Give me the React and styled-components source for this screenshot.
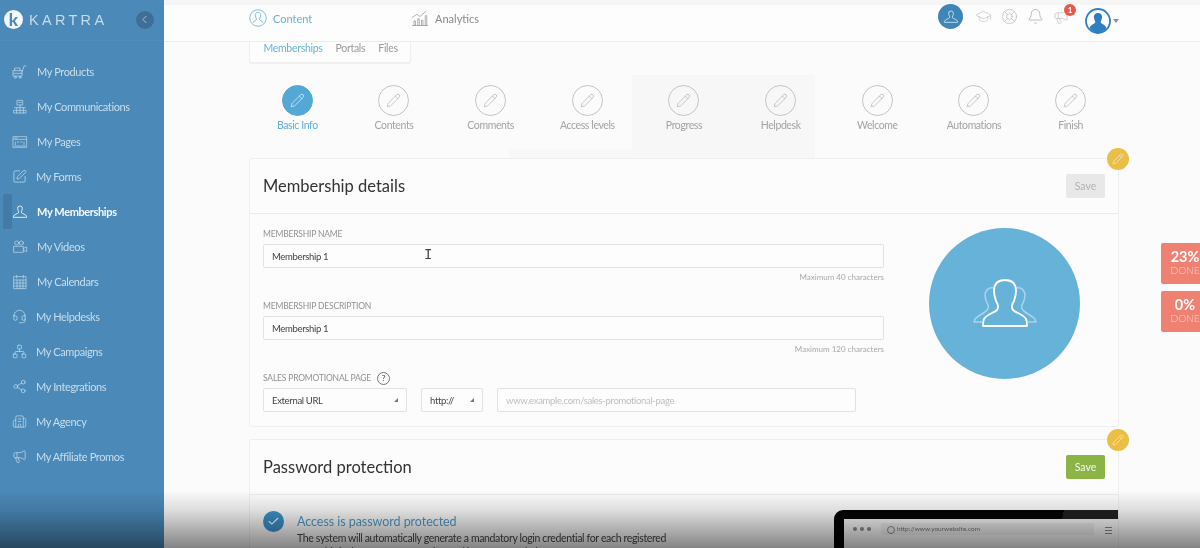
import React from "react";
import styled, { createGlobalStyle } from "styled-components";
import { Pencil, GraduationCap, LifeBuoy, Bell, Megaphone, SquarePen, Headset, Network, Share2, Building2, ChevronLeft, Check } from "lucide-react";

const Global = createGlobalStyle`
  html, body { margin: 0; padding: 0; width: 1200px; height: 548px; overflow: hidden; background: #fbfbfb; }
  * { box-sizing: border-box; }
  body { font-family: Lato, "Open Sans", sans-serif; }
`;

const Page = styled.div`
  position: relative; width: 1200px; height: 548px; display: flex; overflow: hidden;
  filter: blur(0.45px);
`;
const Sidebar = styled.aside`
  width: 163.5px; flex: none; background: #4b8ab8; display: flex; flex-direction: column;
`;
const Brand = styled.div`
  height: 41px; display: flex; align-items: center; padding: 0 10px 1px 4px; gap: 6px;
  border-bottom: 1px solid rgba(255,255,255,.04);
`;
const LogoMark = styled.div`
  width: 19px; height: 19px; border-radius: 50%; background: #f2f7fa; color: #4b8ab8;
  display: flex; align-items: center; justify-content: center; font: 900 17px/19px Lato, sans-serif;
`;
const LogoText = styled.span`
  font: 400 14.5px "Liberation Sans", sans-serif; letter-spacing: 3.3px; color: #c6dcea; flex: 1;
`;
const Collapse = styled.button`
  width: 18px; height: 18px; padding: 0; border: 0; border-radius: 50%; background: #3f6f96; color: #b9d3e4;
  display: flex; align-items: center; justify-content: center;
`;
const Nav = styled.nav`
  display: flex; flex-direction: column; padding-top: 13px;
`;
const NavItem = styled.div`
  position: relative; height: 35px; display: flex; align-items: center; padding-left: 12px; gap: 9px;
  font-size: 11px; letter-spacing: -.38px; color: ${p => (p.$active ? "#f6fafc" : "#c8deec")}; font-weight: ${p => (p.$active ? 700 : 400)};
  &::before {
    content: ""; display: ${p => (p.$active ? "block" : "none")}; position: absolute; left: 3px; top: 0; bottom: 0; width: 9px;
    background: #437ba6; border-radius: 1px;
  }
  svg { position: relative; flex: none; }
`;
const Main = styled.main`
  flex: 1; min-width: 0; display: flex; flex-direction: column; background: #fbfbfb;
`;
const TopBar = styled.header`
  height: 42px; flex: none; display: flex; align-items: center; padding: 0 81px 5px 85.5px;
  background: linear-gradient(#f5f5f5 0 5px, #fdfdfd 5px); border-bottom: 1px solid #ececec;
`;
const TopTab = styled.div`
  width: ${p => p.$width}px; display: flex; align-items: center; gap: 6px; font-size: 11px;
  color: ${p => (p.$active ? "#68b2d8" : "#8c8c8c")};
`;
const TopIcons = styled.div`
  margin-left: auto; margin-top: -3px; display: flex; align-items: center; gap: 9px; color: #bdbdbd;
`;
const Agent = styled.div`
  width: 25px; height: 25px; border-radius: 50%; background: #3f86b8; color: #dcebf4;
  display: flex; align-items: center; justify-content: center; margin-right: 3px;
`;
const BadgeWrap = styled.div`
  position: relative; display: flex;
`;
const Count = styled.span`
  position: absolute; top: -5px; right: -7px; width: 12px; height: 12px; border-radius: 50%;
  background: #e9584b; color: #fff; font: 700 8px/12px Lato, sans-serif; text-align: center;
`;
const Avatar = styled.div`
  display: flex; align-items: center; gap: 2px; margin-left: 7px; margin-top: 8px;
  &::after { content: ""; border: 3px solid transparent; border-top: 4px solid #8f8f8f; margin-top: 4px; }
`;
const SubTabs = styled.div`
  flex: none; align-self: flex-start; margin-left: 85.5px; width: 162px; height: 21px; display: flex; align-items: center; gap: 13px;
  padding: 0 0 8px 13.5px; background: #fdfdfd; border: 1px solid #efefef; border-top: 0; border-radius: 0 0 3px 3px;
  box-shadow: 0 1px 1px rgba(0,0,0,.05); font-size: 10.5px; letter-spacing: -.3px; color: #9a9a9a;
`;
const SubTab = styled.span`
  color: ${p => (p.$active ? "#68b2d8" : "#9a9a9a")};
`;
const Content = styled.div`
  flex: none; margin-left: 85.5px; width: 870px; display: flex; flex-direction: column;
`;
const Steps = styled.div`
  flex: none; display: grid; grid-template-columns: repeat(9, 1fr); height: 95px; padding-top: 22px;
  background:
    linear-gradient(#f7f7f7, #f7f7f7) 383px 12px / 183px 83px no-repeat,
    linear-gradient(#f8f8f8, #f8f8f8) 260px 86px / 123px 9px no-repeat;
`;
const Step = styled.div`
  display: flex; flex-direction: column; align-items: center; gap: 3px; font-size: 10.5px; letter-spacing: -.4px;
  color: ${p => (p.$active ? "#62aed6" : "#a3a3a3")};
`;
const StepCircle = styled.div`
  width: 31px; height: 31px; border-radius: 50%; display: flex; align-items: center; justify-content: center;
  background: ${p => (p.$active ? "#54a8d6" : "transparent")}; color: ${p => (p.$active ? "#e6f3fa" : "#b5b5b5")};
  border: 1px solid ${p => (p.$active ? "#54a8d6" : "#c4c4c4")};
`;
const Card = styled.section`
  position: relative; flex: none; background: #fcfcfc; border: 1px solid #efefef; border-radius: 3px;
  margin-bottom: 12px;
`;
const CardHead = styled.div`
  height: 55px; display: flex; align-items: center; justify-content: space-between; padding: 0 13px;
  border-bottom: 1px solid #ececec;
`;
const CardTitle = styled.h2`
  margin: 0; font-size: 16.5px; font-weight: 400; color: #333;
`;
const SaveButton = styled.button`
  width: 39px; height: 24px; padding: 0; border: 0; border-radius: 2px; font: 400 10.5px Lato, sans-serif;
  background: ${p => (p.$on ? "#8ab546" : "#e8e8e8")}; color: ${p => (p.$on ? "#f4f8ea" : "#b3b3b3")};
`;
const EditBadge = styled.div`
  position: absolute; top: -11px; right: -11px; width: 22px; height: 22px; border-radius: 50%; background: #eabf48;
  color: #fbf3d8; display: flex; align-items: center; justify-content: center;
`;
const Body = styled.div`
  height: 212px; display: flex; padding: 14px 0 0 13px;
`;
const Form = styled.div`
  width: 621px; display: flex; flex-direction: column;
`;
const Label = styled.div`
  display: flex; align-items: center; gap: 6px; height: 12px; font-size: 8.5px; letter-spacing: -.18px; color: #929292; margin-bottom: 4px;
`;
const Help = styled.span`
  width: 13px; height: 13px; border: 1px solid #777; border-radius: 50%; font: 700 8px/11px Lato, sans-serif;
  color: #666; text-align: center;
`;
const Field = styled.div`
  width: ${p => p.$width || "100%"}; flex: none; height: 24px; display: flex; align-items: center; justify-content: space-between;
  padding: 0 8px; background: #fdfdfd; border: 1px solid #e2e2e2; border-radius: 2px; font-size: 9.5px; letter-spacing: -.33px;
  color: ${p => (p.$muted ? "#c0c0c0" : "#444")};
  ${p => p.$caret && `&::after { content: ""; border-style: solid; border-width: 0 0 4px 4px; border-color: transparent transparent #777 transparent; }`}
`;
const Hint = styled.div`
  height: 32px; padding-top: 4px; text-align: right; font-size: 8px; color: #a8a8a8;
`;
const FieldRow = styled.div`
  display: flex; gap: 14px; width: 593px;
`;
const PictureCol = styled.div`
  flex: 1; display: flex; justify-content: center; padding: 0 24px 0 31px;
`;
const Picture = styled.div`
  width: 151px; height: 151px; border-radius: 50%; background: #66b2d9; display: flex; align-items: center; justify-content: center;
`;
const Protected = styled.div`
  display: flex; padding: 15px 0 0 13px; height: 60px;
`;
const CheckCircle = styled.div`
  width: 21px; height: 21px; margin-top: 1px; border-radius: 50%; background: #3e92cb; color: #fff; flex: none;
  display: flex; align-items: center; justify-content: center;
`;
const ProtectedText = styled.div`
  margin: 3px 0 0 13px; width: 372px; font-size: 10.5px; letter-spacing: -.35px; line-height: 14px; color: #444;
`;
const ProtectedTitle = styled.div`
  font-size: 12.5px; letter-spacing: -.05px; color: #4f9dcb; line-height: 17px; margin-bottom: 1px;
`;
const Browser = styled.div`
  width: 284px; height: 60px; margin-left: auto; margin-top: 0; border-radius: 9px 0 0 0; padding: 9px 0 0 10px;
  background: linear-gradient(100deg, #050505 78%, #222 78%);
`;
const BrowserBar = styled.div`
  height: 40px; background: #fafafa; display: flex; align-items: flex-start; gap: 3px; padding: 4px 6px 0 9px;
  span { margin-top: 4px; }
`;
const Dot = styled.span`
  width: 4px; height: 4px; border-radius: 50%; background: #8a8a8a;
`;
const Url = styled.div`
  flex: 1; height: 12px; margin: 0 8px 0 7px; background: #eeeeee; font-size: 6.5px; line-height: 12px; padding-left: 16px; color: #777; position: relative;
  &::before { content: ""; position: absolute; left: 6px; top: 3px; width: 6px; height: 6px; border: 1px solid #888; border-radius: 50%; }
`;
const Menu = styled.span`
  width: 7px; height: 7px; border-top: 1px solid #888; border-bottom: 1px solid #888; position: relative;
  &::after { content: ""; position: absolute; left: 0; right: 0; top: 2px; height: 1px; background: #888; }
`;
const ProgressStack = styled.div`
  position: absolute; top: 243px; right: -9px; display: flex; flex-direction: column; gap: 7px;
`;
const Progress = styled.div`
  width: 48px; height: 41px; background: #ef8173; border-radius: 2px 0 0 2px; color: #fff; text-align: center; padding-top: 6px;
  font: 700 14.5px/16px Lato, sans-serif;
  small { display: block; font-size: 10px; font-weight: 300; line-height: 11px; color: #f9cfc8; }
`;
const Fade = styled.div`
  position: absolute; left: 0; right: 0; bottom: 0; height: 58px; pointer-events: none;
  background: linear-gradient(rgba(0,0,0,0), rgba(0,0,0,.12) 35%, rgba(0,0,0,.48));
`;
const Cursor = styled.div`
  position: absolute; left: 424px; top: 249px; width: 7px; height: 13px; pointer-events: none;
  color: #444; font: 400 14px/13px "Liberation Mono", monospace;
`;

const Icon = ({ size = 16, sw = 1, children, vb = "0 0 24 24" }) => (
  <svg width={size} height={size} viewBox={vb} fill="none" stroke="currentColor" strokeWidth={sw} strokeLinecap="round" strokeLinejoin="round">{children}</svg>
);
const Person = ({ size = 16, sw = 1.3 }) => (
  <Icon size={size} sw={sw}><path d="M9 4.500a3.600 3.600 0 0 1 6 0c.8 1.600.5 4-.4 5.800-.5 1-.9 2-.4 3 1 1.400 6.800 1.800 7.800 5.700v1H2v-1c1-3.900 6.800-4.300 7.800-5.700.5-1 .1-2-.4-3C8.500 8.500 8.200 6.100 9 4.500z" /></Icon>
);
const Cart = () => (
  <Icon><path d="M2 10h13v8H2zM4 10V6h8v4M15 12l3-9h3M2 14h13" /><circle cx="5" cy="20" r="1.500" /><circle cx="12" cy="20" r="1.500" /></Icon>
);
const Comms = () => (
  <Icon><rect x="8" y="2" width="8" height="7" /><path d="M10 5h4M4 13h16M3 17h18v4H3zM7 13v8M12 9v12M17 13v8" /></Icon>
);
const Http = () => (
  <Icon><rect x="2" y="4" width="20" height="16" /><path d="M2 8h20M4 6h4M5 12v4M8 12h2M13 12h2M18 12v4M4 18h16" /></Icon>
);
const Film = () => (
  <Icon><circle cx="7" cy="6" r="3" /><circle cx="14" cy="6" r="3" /><rect x="3" y="11" width="14" height="9" /><path d="M17 14l5-2v7l-5-2" /></Icon>
);
const Calendar = () => (
  <Icon><rect x="3" y="4" width="18" height="18" /><path d="M3 9h18M3 13.500h18M3 18h18M7.500 9v13M12 9v13M16.500 9v13M7 2v4M17 2v4" /></Icon>
);
const Chart = () => (
  <Icon size={18} sw={.9}><path d="M2 22h20M4 22v-6h2v6M9 22v-9h2v9M14 22v-7h2v7M19 22V9h2v13M2 11l6-4 4 3 8-7" /></Icon>
);
const Group = () => (
  <svg width="64" height="50" viewBox="0 0 64 50" fill="none" strokeWidth="1.500" strokeLinejoin="round">
    <path stroke="#a9d5ea" d="M20 9c-4-1-7 2-8 6 0 4 1 7 2 9 2 3 2 5 0 7-2 3-8 5-12 9l-1 3h8M44 9c4-1 7 2 8 6 0 4-1 7-2 9-2 3-2 5 0 7 2 3 8 5 12 9l1 3h-8" />
    <path stroke="#fff" strokeWidth="1.800" d="M32 1c-7 0-11 4-11 11 0 4 1 7 2 10 2 3 3 6 1 9-3 3-10 4-13 9-1 2-1 5-1 7h44c0-2 0-5-1-7-3-5-10-6-13-9-2-3-1-6 1-9 1-3 2-6 2-10 0-7-4-11-11-11z" />
  </svg>
);

const navItems = [
  ["My Products", <Cart />],
  ["My Communications", <Comms />],
  ["My Pages", <Http />],
  ["My Forms", <SquarePen size={15} strokeWidth={1.2} />],
  ["My Memberships", <Person />, true],
  ["My Videos", <Film />],
  ["My Calendars", <Calendar />],
  ["My Helpdesks", <Headset size={15} strokeWidth={1.1} />],
  ["My Campaigns", <Network size={15} strokeWidth={1.1} />],
  ["My Integrations", <Share2 size={15} strokeWidth={1.1} />],
  ["My Agency", <Building2 size={15} strokeWidth={1.1} />],
  ["My Affiliate Promos", <Megaphone size={15} strokeWidth={1.1} />],
];
const steps = ["Basic Info", "Contents", "Comments", "Access levels", "Progress", "Helpdesk", "Welcome", "Automations", "Finish"];

export default function App() {
  return (
    <Page>
      <Global />
      <Sidebar>
        <Brand>
          <LogoMark>k</LogoMark>
          <LogoText>KARTRA</LogoText>
          <Collapse><ChevronLeft size={13} strokeWidth={1.5} /></Collapse>
        </Brand>
        <Nav>
          {navItems.map(([name, icon, active]) => (
            <NavItem key={name} $active={active}>{icon}{name}</NavItem>
          ))}
        </Nav>
      </Sidebar>
      <Main>
        <TopBar>
          <TopTab $active $width={162}>
            <svg width="18" height="18" viewBox="0 0 24 24" fill="none" stroke="currentColor" strokeWidth="1.100"><circle cx="12" cy="12" r="11" /><path d="M12 4.500c-3 0-4 2.500-3.500 5 .3 2 1.500 3 1.500 4.500 0 1-3 2-5 4M12 4.500c3 0 4 2.500 3.500 5-.3 2-1.500 3-1.500 4.500 0 1 3 2 5 4" /></svg>
            Content
          </TopTab>
          <TopTab><Chart />Analytics</TopTab>
          <TopIcons>
            <Agent><Person size={16} sw={1.2} /></Agent>
            <GraduationCap size={17} strokeWidth={.9} />
            <LifeBuoy size={17} strokeWidth={1.1} />
            <Bell size={17} strokeWidth={.9} color="#999" />
            <BadgeWrap><Megaphone size={16} strokeWidth={1} /><Count>1</Count></BadgeWrap>
            <Avatar>
              <svg width="26" height="26" viewBox="0 0 26 26"><circle cx="13" cy="13" r="12" fill="#fff" stroke="#2f7ec0" strokeWidth="1.800" /><path fill="#2f7ec0" d="M13 5c-3 0-4.500 2.300-4 5 .3 2 1.300 3.300 1.300 4.300 0 1.500-4.500 2-5.800 5.700A11 11 0 0 0 13 24.500a11 11 0 0 0 8.500-4.500c-1.300-3.700-5.800-4.200-5.800-5.700 0-1 1-2.300 1.300-4.300.5-2.700-1-5-4-5z" /></svg>
            </Avatar>
          </TopIcons>
        </TopBar>
        <SubTabs><SubTab $active>Memberships</SubTab><SubTab>Portals</SubTab><SubTab>Files</SubTab></SubTabs>
        <Content>
          <Steps>
            {steps.map((s, i) => (
              <Step key={s} $active={i === 0}>
                <StepCircle $active={i === 0}><Pencil size={15} strokeWidth={1.200} /></StepCircle>
                {s}
              </Step>
            ))}
          </Steps>
          <Card>
            <EditBadge><Pencil size={12} strokeWidth={1.200} /></EditBadge>
            <CardHead><CardTitle>Membership details</CardTitle><SaveButton>Save</SaveButton></CardHead>
            <Body>
              <Form>
                <Label>MEMBERSHIP NAME</Label>
                <Field>Membership 1</Field>
                <Hint>Maximum 40 characters</Hint>
                <Label>MEMBERSHIP DESCRIPTION</Label>
                <Field>Membership 1</Field>
                <Hint>Maximum 120 characters</Hint>
                <Label>SALES PROMOTIONAL PAGE <Help>?</Help></Label>
                <FieldRow>
                  <Field $width="144px" $caret>External URL</Field>
                  <Field $width="62px" $caret>http://</Field>
                  <Field $width="359px" $muted>www.example.com/sales-promotional-page</Field>
                </FieldRow>
              </Form>
              <PictureCol><Picture><Group /></Picture></PictureCol>
            </Body>
          </Card>
          <Card>
            <EditBadge><Pencil size={12} strokeWidth={1.200} /></EditBadge>
            <CardHead><CardTitle>Password protection</CardTitle><SaveButton $on>Save</SaveButton></CardHead>
            <Protected>
              <CheckCircle><Check size={13} strokeWidth={2} /></CheckCircle>
              <ProtectedText>
                <ProtectedTitle>Access is password protected</ProtectedTitle>
                The system will automatically generate a mandatory login credential for each registered user. This is the most secure option and is recommended for most.
              </ProtectedText>
              <Browser>
                <BrowserBar><Dot /><Dot /><Dot /><Url>http://www.yourwebsite.com</Url><Menu /></BrowserBar>
              </Browser>
            </Protected>
          </Card>
        </Content>
      </Main>
      <ProgressStack>
        <Progress>23%<small>DONE</small></Progress>
        <Progress>0%<small>DONE</small></Progress>
      </ProgressStack>
      <Cursor>I</Cursor>
      <Fade />
    </Page>
  );
}
